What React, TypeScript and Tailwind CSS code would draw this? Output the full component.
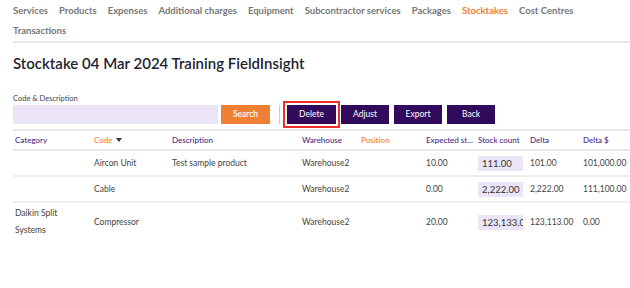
import React from "react";

const tabs = [
  "Services",
  "Products",
  "Expenses",
  "Additional charges",
  "Equipment",
  "Subcontractor services",
  "Packages",
  "Stocktakes",
  "Cost Centres",
];

const rows = [
  {
    category: "",
    code: "Aircon Unit",
    desc: "Test sample product",
    warehouse: "Warehouse2",
    expected: "10.00",
    count: "111.00",
    delta: "101.00",
    deltaValue: "101,000.00",
  },
  {
    category: "",
    code: "Cable",
    desc: "",
    warehouse: "Warehouse2",
    expected: "0.00",
    count: "2,222.00",
    delta: "2,222.00",
    deltaValue: "111,100.00",
  },
  {
    category: "Daikin Split Systems",
    code: "Compressor",
    desc: "",
    warehouse: "Warehouse2",
    expected: "20.00",
    count: "123,133.00",
    delta: "123,113.00",
    deltaValue: "0.00",
  },
];

const cols = "grid grid-cols-[81px_78px_130px_59px_65px_52px_52px_53px_47px]";

export default function App() {
  return (
    <div className="h-[288px] w-[630px] overflow-hidden bg-white pl-[13px] font-['Lato',sans-serif] text-[#333]">
      {/* TABS */}
      <div className="border-b-2 border-[#e6e6e6] pb-[3px] pt-[4px]">
        <div className="flex flex-wrap gap-x-[11px] gap-y-[6px] text-[9.5px] font-bold leading-[14px] text-[#777]">
          {tabs.map((t) => (
            <span key={t} className={t === "Stocktakes" ? "text-[#ee7f35]" : ""}>
              {t}
            </span>
          ))}
          <span>Transactions</span>
        </div>
      </div>

      {/* TITLE */}
      <h1 className="mt-[10px] text-[15px] font-semibold leading-[20px] text-[#1f2330]">
        Stocktake 04 Mar 2024 Training FieldInsight
      </h1>

      {/* FILTER */}
      <div className="mt-[21px] border-b-2 border-[#e6e6e6] pb-[5px]">
        <p className="text-[7.5px] leading-[10px] text-[#444]">Code &amp; Description</p>
        <div className="mt-[1px] flex items-center">
          <input
            className="h-[19px] w-[205px] bg-[#ebe5f7] outline-none"
            readOnly
          />
          <button className="ml-[3px] h-[19px] w-[49px] bg-[#ee7f35] text-[8.5px] font-semibold text-white">
            Search
          </button>
          <div className="ml-[9px] h-[19px] w-px bg-[#ccc]" />
          <div className="-my-[4px] ml-[3px] border-2 border-[#e8332a] p-[2px]">
            <button className="block h-[19px] w-[49px] bg-[#320a5c] text-[8.5px] text-white">
              Delete
            </button>
          </div>
          <div className="ml-[1px] flex gap-[5px]">
            {["Adjust", "Export", "Back"].map((b) => (
              <button
                key={b}
                className="h-[19px] w-[48px] bg-[#320a5c] text-[8.5px] text-white"
              >
                {b}
              </button>
            ))}
          </div>
        </div>
      </div>

      {/* TABLE */}
      <div className="text-[8.5px]">
        <div className={`${cols} h-[20px] items-center border-b-2 border-[#e6e6e6] text-[8px] font-medium text-[#4b2a86]`}>
          <span className="pl-[2px]">Category</span>
          <span className="flex items-center gap-[3px] text-[#ee7f35]">
            Code
            <svg width="6" height="4" viewBox="0 0 6 4">
              <path d="M0 0h6L3 4z" fill="#333" />
            </svg>
          </span>
          <span>Description</span>
          <span>Warehouse</span>
          <span className="text-[#ee7f35]">Position</span>
          <span className="whitespace-nowrap">Expected st...</span>
          <span className="whitespace-nowrap">Stock count</span>
          <span>Delta</span>
          <span>Delta $</span>
        </div>
        {rows.map((r, i) => (
          <div
            key={r.code}
            className={`${cols} items-center text-[#444] ${
              i === 2 ? "h-[38px]" : "h-[26px] border-b-2 border-[#eeeeee]"
            }`}
          >
            <span className="pl-[2px] pr-[20px] leading-[17px]">{r.category}</span>
            <span>{r.code}</span>
            <span>{r.desc}</span>
            <span>{r.warehouse}</span>
            <span />
            <span>{r.expected}</span>
            <span className="mr-[7px] h-[15px] overflow-hidden whitespace-nowrap bg-[#ebe5f7] pl-[4px] text-[9.5px] leading-[15px] text-[#333]">
              {r.count}
            </span>
            <span className="whitespace-nowrap">{r.delta}</span>
            <span>{r.deltaValue}</span>
          </div>
        ))}
      </div>
    </div>
  );
}
